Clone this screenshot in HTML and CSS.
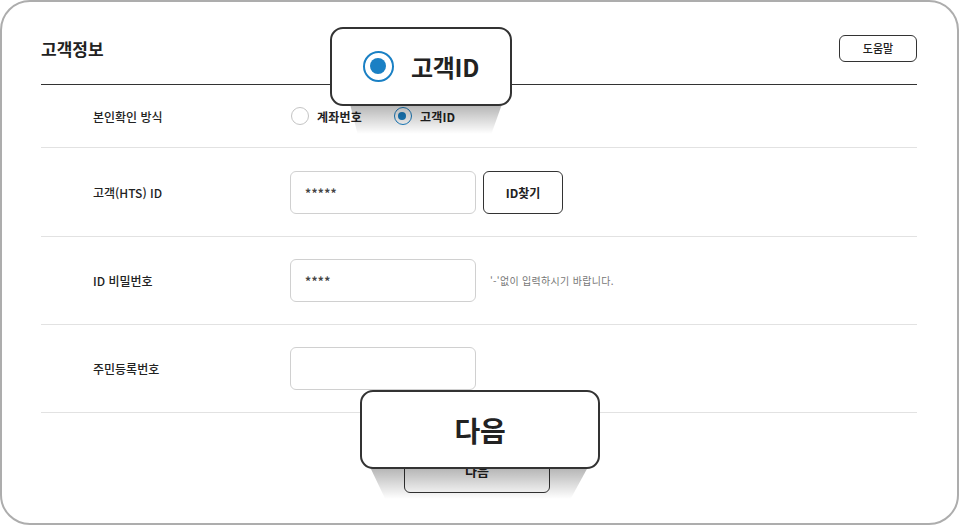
FILE: index.html
```html
<!DOCTYPE html>
<html lang="ko">
<head>
<meta charset="utf-8">
<link rel="stylesheet" href="styles.css">
</head>
<body>
<div class="frame">
  <div class="header">
    <h1 class="title">고객정보</h1>
    <button class="help">도움말</button>
  </div>
  <div class="row row-first">
    <div class="label">본인확인 방식</div>
    <div class="control">
      <span class="radio"></span><span class="radio-text">계좌번호</span>
      <span class="radio radio-on"></span><span class="radio-text">고객ID</span>
    </div>
  </div>
  <div class="row row-tall">
    <div class="label">고객(HTS) ID</div>
    <div class="control">
      <div class="input">*****</div>
      <button class="find">ID찾기</button>
    </div>
  </div>
  <div class="row">
    <div class="label">ID 비밀번호</div>
    <div class="control">
      <div class="input">****</div>
      <span class="hint">'-'없이 입력하시기 바랍니다.</span>
    </div>
  </div>
  <div class="row">
    <div class="label">주민등록번호</div>
    <div class="control">
      <div class="input"></div>
    </div>
  </div>
  <div class="footer">
    <button class="next">다음</button>
  </div>

  <div class="beam beam-top"></div>
  <div class="callout callout-top">
    <span class="big-radio"></span><span class="callout-text">고객ID</span>
  </div>
  <div class="beam beam-bottom"></div>
  <div class="callout callout-bottom">
    <span class="callout-text callout-text-lg">다음</span>
  </div>
</div>
</body>
</html>
```

FILE: styles.css
```css
* { box-sizing: border-box; }
html, body { margin: 0; padding: 0; background: #fff; }
body {
  font-family: "Noto Sans CJK KR", "Noto Sans", sans-serif;
  color: #222;
}
.frame {
  position: relative;
  width: 959px;
  height: 525px;
  border: 2px solid #adadad;
  border-radius: 30px;
  padding: 0 40px 0 39px;
  overflow: hidden;
}
.header {
  height: 83px;
  padding-top: 10px;
  display: flex;
  align-items: center;
  justify-content: space-between;
  border-bottom: 1px solid #333;
}
.title {
  margin: 0;
  font-size: 17px;
  font-weight: 700;
  letter-spacing: 0;
  color: #222;
}
.help {
  width: 78px;
  height: 27px;
  border: 1px solid #333;
  border-radius: 6px;
  background: #fff;
  font-family: inherit;
  font-size: 11px;
  font-weight: 500;
  color: #222;
  padding: 0;
}
.row {
  display: flex;
  align-items: center;
  height: 88px;
  border-bottom: 1px solid #e2e2e2;
}
.row-first { height: 63px; }
.row-tall { height: 89px; }
.label {
  width: 249px;
  padding-left: 52px;
  font-size: 12px;
  font-weight: 500;
  letter-spacing: 0;
  color: #222;
}
.control {
  display: flex;
  align-items: center;
}
.radio {
  width: 18px;
  height: 18px;
  border: 1px solid #c4c4c4;
  border-radius: 50%;
  margin-left: 1px;
  background: #fff;
  position: relative;
}
.radio-on {
  border: 1.5px solid #1a80c4;
  margin-left: 32px;
}
.radio-on::after {
  content: "";
  position: absolute;
  left: 3.5px;
  top: 3.5px;
  width: 8px;
  height: 8px;
  border-radius: 50%;
  background: #1a80c4;
}
.radio-text {
  margin-left: 8px;
  font-size: 12px;
  font-weight: 700;
  color: #222;
  letter-spacing: 0.2px;
}
.input {
  width: 186px;
  height: 43px;
  border: 1px solid #d0d0d0;
  border-radius: 6px;
  padding: 0 14px;
  display: flex;
  align-items: center;
  font-size: 12px;
  font-weight: 700;
  color: #444;
  letter-spacing: 0.3px;
}
.find {
  margin-left: 7px;
  width: 80px;
  height: 43px;
  border: 1px solid #333;
  border-radius: 6px;
  background: #fff;
  font-family: inherit;
  font-size: 12px;
  font-weight: 700;
  color: #222;
  padding: 0;
}
.hint {
  margin-left: 14px;
  font-size: 10px;
  color: #777;
  letter-spacing: 0.3px;
}
.footer {
  display: flex;
  justify-content: center;
  padding-top: 35px;
  padding-right: 4px;
}
.next {
  width: 146px;
  height: 45px;
  border: 1px solid #333;
  border-radius: 6px;
  background: #fff;
  font-family: inherit;
  font-size: 13px;
  font-weight: 700;
  color: #222;
  padding: 0;
}
.callout {
  position: absolute;
  background: #fff;
  border: 2px solid #333;
  border-radius: 13px;
  display: flex;
  align-items: center;
  justify-content: center;
}
.callout-top {
  left: 328px;
  top: 25px;
  width: 182px;
  height: 79px;
}
.callout-bottom {
  left: 358px;
  top: 388px;
  width: 240px;
  height: 79px;
}
.callout-text {
  font-size: 24px;
  font-weight: 700;
  color: #222;
  letter-spacing: -0.3px;
}
.callout-text-lg { font-size: 28px; }
.big-radio {
  position: relative;
  width: 31px;
  height: 31px;
  border: 2.5px solid #1a80c4;
  border-radius: 50%;
  margin-right: 17px;
}
.big-radio::after {
  content: "";
  position: absolute;
  left: 5px;
  top: 5px;
  width: 16px;
  height: 16px;
  border-radius: 50%;
  background: #1a80c4;
}
.beam {
  position: absolute;
  background: linear-gradient(to bottom, rgba(0,0,0,0.3), rgba(0,0,0,0));
}
.beam-top {
  left: 348px;
  top: 102px;
  width: 152px;
  height: 30px;
  clip-path: polygon(0 0, 100% 0, 93% 100%, 5% 100%);
}
.beam-bottom {
  left: 368px;
  top: 465px;
  width: 218px;
  height: 32px;
  clip-path: polygon(0 0, 100% 0, 92% 100%, 7% 100%);
}
```
